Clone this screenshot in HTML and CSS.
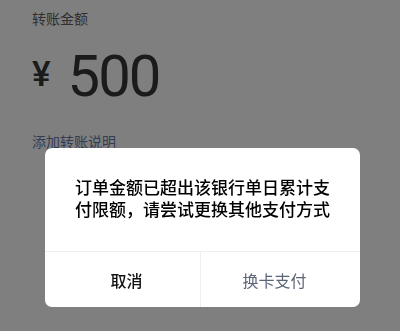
FILE: index.html
```html
<!DOCTYPE html>
<html lang="zh-CN">
<head>
    <meta charset="UTF-8">
    <meta name="viewport" content="width=device-width, initial-scale=1.0">
    <title>转账</title>
    <link rel="stylesheet" href="styles.css">
</head>
<body>
    <div class="page">
        <div class="amount-label">转账金额</div>

        <!-- Amount -->
        <div class="amount">
            <span class="currency">¥</span>
            <span class="value">500</span>
        </div>

        <div class="add-note">添加转账说明</div>
    </div>

    <!-- Mask + alert dialog -->
    <div class="mask">
        <div class="dialog">
            <div class="dialog-body">
                订单金额已超出该银行单日累计支付限额，请尝试更换其他支付方式
            </div>
            <div class="dialog-buttons">
                <button class="dialog-button cancel-button">取消</button>
                <button class="dialog-button switch-button">换卡支付</button>
            </div>
        </div>
    </div>
</body>
</html>
```

FILE: styles.css
```css
/* Basic page styling */
body {
    margin: 0;
    background: #fff;
    font-family: "Noto Sans CJK SC", "Noto Sans", sans-serif;
    overflow: hidden;
}

.page {
    height: 331px;
    padding: 8px 32px 0;
    box-sizing: border-box;
}

.amount-label {
    font-size: 14px;
    line-height: 20px;
    color: #606060;
}

/* Big amount */
.amount {
    display: flex;
    align-items: center;
    margin-top: 20px;
    height: 56px;
    color: #363636;
}

.currency {
    font-family: Roboto, sans-serif;
    font-size: 35px;
    font-weight: 500;
    margin-right: 17px;
    margin-top: -4px;
}

.value {
    font-family: Roboto, sans-serif;
    font-size: 58px;
    font-weight: 400;
    letter-spacing: -2px;
}

.add-note {
    margin-top: 27px;
    font-size: 14px;
    line-height: 20px;
    color: #6a7aa8;
}

/* Dark mask over the page */
.mask {
    position: fixed;
    inset: 0;
    background: rgba(0, 0, 0, 0.5);
    display: flex;
    flex-direction: column;
    justify-content: flex-end;
    padding: 0 40px 24px 45px;
}

.dialog {
    background: #fff;
    border-radius: 7px;
    overflow: hidden;
}

.dialog-body {
    padding: 28px 28px 31px;
    font-size: 17px;
    font-weight: 500;
    line-height: 22px;
    color: #000;
    text-align: center;
}

.dialog-buttons {
    display: flex;
    border-top: 1px solid #efefef;
}

.dialog-button {
    flex: 1;
    height: 55px;
    border: none;
    background: none;
    font-family: "Noto Sans CJK SC", sans-serif;
    font-size: 16px;
    padding: 0;
}

.cancel-button {
    color: #111;
    font-weight: 500;
    padding-left: 8px;
    border-right: 1px solid #efefef;
}

.switch-button {
    color: #5c6577;
    padding-right: 12px;
}
```
